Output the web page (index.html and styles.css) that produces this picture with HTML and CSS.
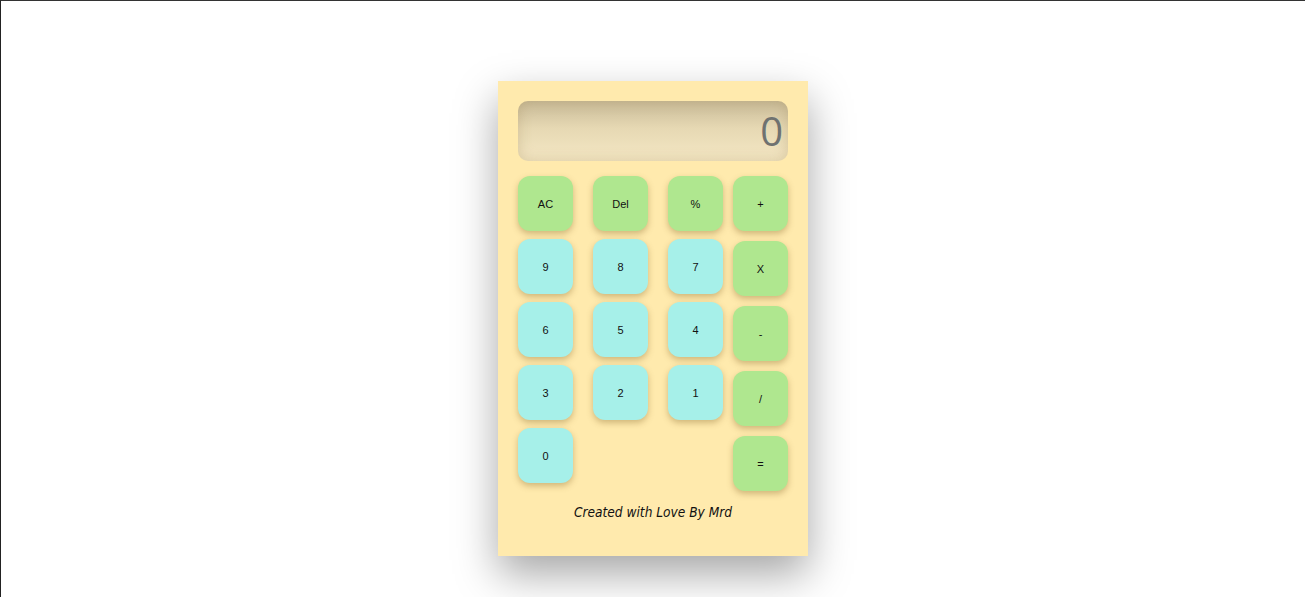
FILE: index.html
```html
<!DOCTYPE html>
<html>
<head>
<meta charset="utf-8">
<link rel="stylesheet" href="styles.css">
</head>
<body>
<div class="page">
  <div class="calc">
    <div class="display">0</div>
    <div class="keys">
      <div class="grid">
        <button class="key op">AC</button>
        <button class="key op">Del</button>
        <button class="key op">%</button>
        <button class="key num">9</button>
        <button class="key num">8</button>
        <button class="key num">7</button>
        <button class="key num">6</button>
        <button class="key num">5</button>
        <button class="key num">4</button>
        <button class="key num">3</button>
        <button class="key num">2</button>
        <button class="key num">1</button>
        <button class="key num">0</button>
      </div>
      <div class="side">
        <button class="key op">+</button>
        <button class="key op">X</button>
        <button class="key op">-</button>
        <button class="key op">/</button>
        <button class="key op">=</button>
      </div>
    </div>
    <p class="credit">Created with Love By Mrd</p>
  </div>
</div>
</body>
</html>
```
FILE: styles.css
```css
html, body { margin: 0; padding: 0; height: 100%; background: #fff; }
body { overflow: hidden; }
.page {
  box-sizing: border-box;
  height: 597px;
  border-top: 1px solid #333;
  border-left: 1px solid #222;
  display: flex;
  justify-content: center;
  padding-top: 80px;
}
.calc {
  width: 310px;
  height: 475px;
  box-sizing: border-box;
  background: #ffeaad;
  padding: 20px;
  box-shadow: 0 18px 40px rgba(0,0,0,0.35);
  display: flex;
  flex-direction: column;
}
.display {
  height: 60px;
  border-radius: 10px;
  background: linear-gradient(to bottom, #c9bb98 0%, #e6d8b3 45%, #f5e8c5 100%);
  box-shadow: inset 0 0 14px rgba(150,125,75,0.3);
  font-family: "Open Sans", "DejaVu Sans", sans-serif;
  font-size: 40px;
  color: #6f7270;
  text-align: right;
  line-height: 60px;
  padding-right: 5px;
}
.keys {
  display: flex;
  gap: 10px;
  margin-top: 15px;
}
.grid {
  display: grid;
  grid-template-columns: repeat(3, 55px);
  grid-auto-rows: 55px;
  column-gap: 20px;
  row-gap: 8px;
}
.side {
  display: flex;
  flex-direction: column;
  gap: 10px;
}
.key {
  width: 55px;
  height: 55px;
  border: none;
  border-radius: 12px;
  font-family: "Liberation Sans", Arial, sans-serif;
  font-size: 11px;
  color: #111;
  padding: 0;
  box-shadow: 0 3px 6px rgba(120,90,30,0.35);
}
.op { background: #afe78f; }
.num { background: #a6f0e9; }
.credit {
  margin: 13px 0 0;
  text-align: center;
  font-family: "DejaVu Sans Condensed", "DejaVu Sans", sans-serif;
  font-style: italic;
  font-size: 13.6px;
  color: #111;
}
```
